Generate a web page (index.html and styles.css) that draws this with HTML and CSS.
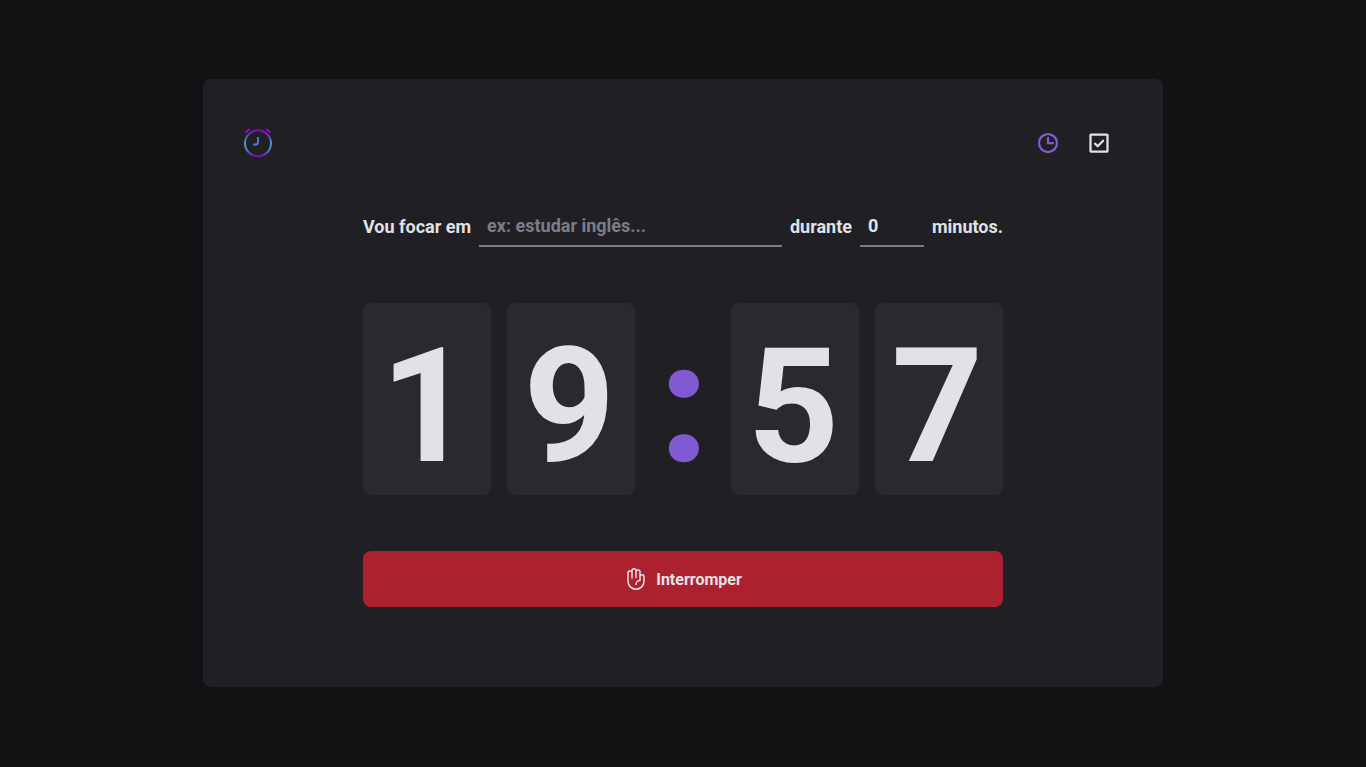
FILE: index.html
```html
<!DOCTYPE html>
<html lang="pt-BR">
<head>
<meta charset="utf-8">
<title>Timer</title>
<link rel="stylesheet" href="styles.css">
</head>
<body>
<div class="layout">
  <header class="header">
    <svg class="logo" width="32" height="32" viewBox="0 0 32 32" fill="none">
      <defs>
        <linearGradient id="ring" x1="0" y1="0" x2="0" y2="1"><stop offset="0" stop-color="#8208b0"/><stop offset=".2" stop-color="#6a3cb8"/><stop offset=".5" stop-color="#3aa0c8"/><stop offset=".75" stop-color="#4a80c8"/><stop offset="1" stop-color="#8208b0"/></linearGradient>
      </defs>
      <circle cx="15" cy="16.300" r="13" stroke="url(#ring)" stroke-width="2"/>
      <path d="M2.600 5.800 Q4 3.300 7 2.300 M23 2.300 Q26 3.300 27.400 5.800" stroke="#7d12ac" stroke-width="2.200"/>
      <path d="M15 10V15.500Q15 17.500 13 17.500H10" stroke="#4478dc" stroke-width="2"/>
    </svg>
    <nav class="nav">
      <a class="nav-link active"><svg width="24" height="24" viewBox="0 0 24 24" fill="none" stroke="currentColor" stroke-width="2.250" stroke-linecap="round" stroke-linejoin="round"><circle cx="12" cy="12" r="9"/><path d="M12 7v5h5"/></svg></a>
      <a class="nav-link"><svg width="24" height="24" viewBox="0 0 24 24" fill="none" stroke="currentColor" stroke-width="2.250" stroke-linecap="round" stroke-linejoin="round"><rect x="3.500" y="3.500" width="17" height="17" rx=".5"/><path d="M8 12.700l2.700 2.500 5.400-5.500"/></svg></a>
    </nav>
  </header>
  <main class="home">
    <form class="form">
      <div class="task-row">
        <label class="label" for="task">Vou focar em</label>
        <input id="task" class="field task" placeholder="ex: estudar inglês...">
        <label class="label" for="minutes">durante</label>
        <input id="minutes" class="field minutes" value="0">
        <span class="label">minutos.</span>
      </div>
      <div class="countdown">
        <span class="digit one">1</span><span class="digit">9</span>
        <div class="separator">:</div>
        <span class="digit">5</span><span class="digit">7</span>
      </div>
      <button class="stop" type="button">
        <svg width="24" height="24" viewBox="0 0 24 24" fill="none" stroke="currentColor" stroke-width="1.500" stroke-linecap="round" stroke-linejoin="round"><path d="M8 11V3.700a2 2 0 0 1 4 0V10.500M12 5a2 2 0 0 1 4 0V11.500M16 9.700a2 2 0 0 1 4 0v4.500a8 8 0 0 1-16 0V6a2 2 0 0 1 4 0M12 17.500a4 4 0 0 1 4-4v-2"/></svg>
        Interromper
      </button>
    </form>
  </main>
</div>
</body>
</html>
```
FILE: styles.css
```css
* { margin: 0; padding: 0; box-sizing: border-box; }
body { background: #121214; color: #e1e1e6; font: 400 16px Roboto, sans-serif; }
.layout { width: 960px; height: 608px; margin: 79px auto; padding: 40px; background: #202024; border-radius: 8px; display: flex; flex-direction: column; }
.header { display: flex; align-items: center; justify-content: space-between; height: 48px; }
.logo { display: block; }
.nav { display: flex; gap: 3px; }
.nav-link { width: 48px; height: 48px; display: flex; align-items: center; justify-content: center; color: #e1e1e6; }
.active { color: #8159d3; }
.home { flex: 1; display: flex; flex-direction: column; align-items: center; padding-top: 40px; }
.form { width: 640px; display: flex; flex-direction: column; gap: 56px; }
.task-row { display: flex; align-items: center; gap: 8px; height: 40px; font-size: 18px; font-weight: 700; }
.label { padding-bottom: 2px; }
.field { height: 40px; min-width: 0; background: transparent; border: 0; border-bottom: 2px solid #7c7c8a; padding: 0 8px 2px; color: #e1e1e6; font: inherit; }
.field::placeholder { color: #7c7c8a; }
.task { flex: 1; }
.minutes { width: 64px; }
.countdown { display: flex; gap: 16px; font: 700 160px/128px Roboto, sans-serif; }
.digit { width: 128px; height: 192px; padding: 40px 3px 24px 0; text-align: center; background: #29292e; border-radius: 8px; }
.one { padding-right: 1px; }
.separator { width: 64px; height: 192px; padding: 38px 0 26px 2px; color: #8159d3; -webkit-text-stroke: 4.600px #8159d3; display: flex; justify-content: center; }
.stop { height: 56px; border: 0; border-radius: 8px; background: #ab222e; color: #e1e1e6; font: 700 16px Roboto, sans-serif; display: flex; align-items: center; justify-content: center; gap: 8px; }
```
